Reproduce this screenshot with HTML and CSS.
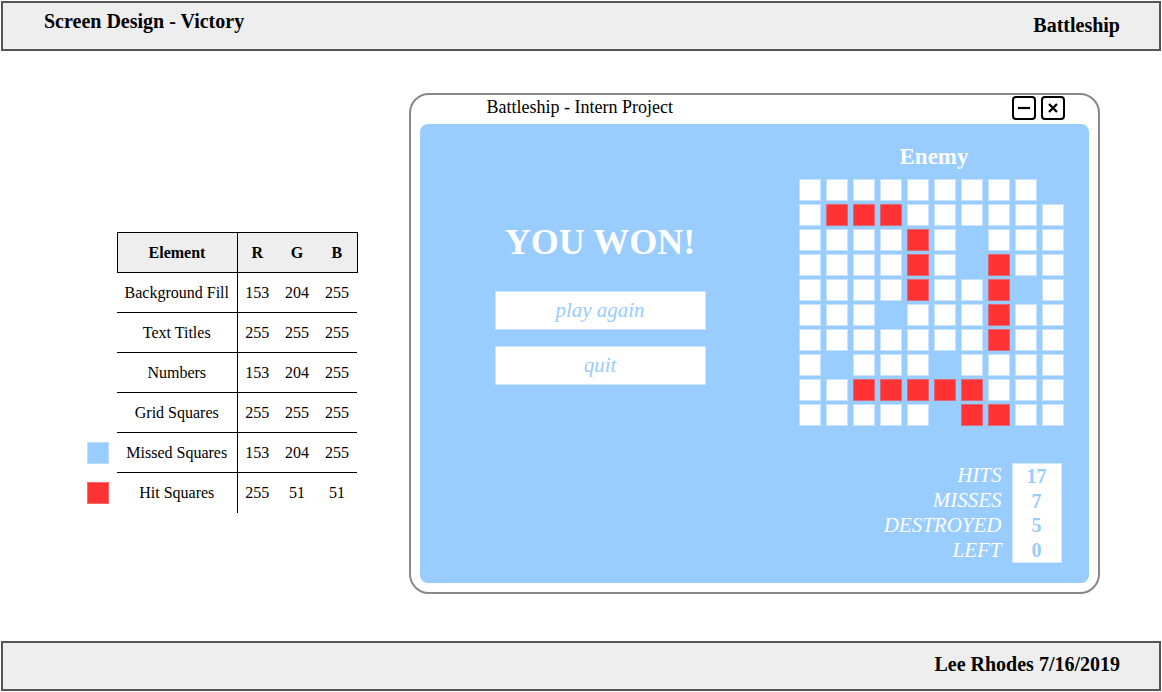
FILE: index.html
```html
<!DOCTYPE html>
<html lang="en">
<head>
<meta charset="utf-8">
<title>Screen Design - Victory</title>
<link rel="stylesheet" href="styles.css">
</head>
<body>
<header class="bar top-bar">
  <div class="bar-title">Screen Design - Victory</div>
  <div class="bar-right">Battleship</div>
</header>

<main class="content">
  <table class="legend">
    <colgroup>
      <col class="col-sw"><col class="col-el"><col class="col-num"><col class="col-num"><col class="col-num">
    </colgroup>
    <thead>
      <tr><th class="sw"></th><th class="el">Element</th><th class="r">R</th><th class="g">G</th><th class="b">B</th></tr>
    </thead>
    <tbody>
      <tr><td class="sw"></td><td class="el">Background Fill</td><td>153</td><td>204</td><td>255</td></tr>
      <tr><td class="sw"></td><td class="el">Text Titles</td><td>255</td><td>255</td><td>255</td></tr>
      <tr><td class="sw"></td><td class="el">Numbers</td><td>153</td><td>204</td><td>255</td></tr>
      <tr><td class="sw"></td><td class="el">Grid Squares</td><td>255</td><td>255</td><td>255</td></tr>
      <tr><td class="sw"><div class="swatch swatch-miss"></div></td><td class="el">Missed Squares</td><td>153</td><td>204</td><td>255</td></tr>
      <tr><td class="sw"><div class="swatch swatch-hit"></div></td><td class="el">Hit Squares</td><td>255</td><td>51</td><td>51</td></tr>
    </tbody>
  </table>

  <section class="window">
    <div class="titlebar">
      <span class="wtitle">Battleship - Intern Project</span>
      <div class="wbtns">
        <div class="wbtn"><svg viewBox="0 0 20 20" width="20" height="20"><line x1="4" y1="10" x2="16" y2="10" stroke="#000" stroke-width="2.2"/></svg></div>
        <div class="wbtn"><svg viewBox="0 0 20 20" width="20" height="20"><path d="M6 6 L14 14 M14 6 L6 14" stroke="#000" stroke-width="2.3" fill="none"/></svg></div>
      </div>
    </div>
    <div class="panel">
      <div class="result">
        <h1 class="won">YOU WON!</h1>
        <div class="action">play again</div>
        <div class="action">quit</div>
      </div>
      <div class="board">
        <h2 class="enemy">Enemy</h2>
        <div class="grid">
          <div class="c"></div><div class="c"></div><div class="c"></div><div class="c"></div><div class="c"></div><div class="c"></div><div class="c"></div><div class="c"></div><div class="c"></div><div class="c m"></div>
          <div class="c"></div><div class="c h"></div><div class="c h"></div><div class="c h"></div><div class="c"></div><div class="c"></div><div class="c"></div><div class="c"></div><div class="c"></div><div class="c"></div>
          <div class="c"></div><div class="c"></div><div class="c"></div><div class="c"></div><div class="c h"></div><div class="c"></div><div class="c m"></div><div class="c"></div><div class="c"></div><div class="c"></div>
          <div class="c"></div><div class="c"></div><div class="c"></div><div class="c"></div><div class="c h"></div><div class="c"></div><div class="c m"></div><div class="c h"></div><div class="c"></div><div class="c"></div>
          <div class="c"></div><div class="c"></div><div class="c"></div><div class="c"></div><div class="c h"></div><div class="c"></div><div class="c"></div><div class="c h"></div><div class="c m"></div><div class="c"></div>
          <div class="c"></div><div class="c"></div><div class="c"></div><div class="c m"></div><div class="c"></div><div class="c"></div><div class="c"></div><div class="c h"></div><div class="c"></div><div class="c"></div>
          <div class="c"></div><div class="c"></div><div class="c"></div><div class="c"></div><div class="c"></div><div class="c"></div><div class="c"></div><div class="c h"></div><div class="c"></div><div class="c"></div>
          <div class="c"></div><div class="c m"></div><div class="c"></div><div class="c"></div><div class="c"></div><div class="c m"></div><div class="c"></div><div class="c"></div><div class="c"></div><div class="c"></div>
          <div class="c"></div><div class="c"></div><div class="c h"></div><div class="c h"></div><div class="c h"></div><div class="c h"></div><div class="c h"></div><div class="c"></div><div class="c"></div><div class="c"></div>
          <div class="c"></div><div class="c"></div><div class="c"></div><div class="c"></div><div class="c"></div><div class="c m"></div><div class="c h"></div><div class="c h"></div><div class="c"></div><div class="c"></div>
        </div>
        <div class="stats">
          <div class="stat-labels">
            <div>HITS</div>
            <div>MISSES</div>
            <div>DESTROYED</div>
            <div>LEFT</div>
          </div>
          <div class="stat-values">
            <div>17</div>
            <div>7</div>
            <div>5</div>
            <div>0</div>
          </div>
        </div>
      </div>
    </div>
  </section>
</main>

<footer class="bar bottom-bar">
  <div class="bar-right foot-text">Lee Rhodes 7/16/2019</div>
</footer>
</body>
</html>
```

FILE: styles.css
```css
* { box-sizing: border-box; }

html, body {
  margin: 0;
  padding: 0;
}

body {
  width: 1162px;
  height: 692px;
  overflow: hidden;
  background: #fff;
  color: #000;
  font-family: "Liberation Serif", "Times New Roman", serif;
}

/* ---------- header / footer bars ---------- */
.bar {
  display: flex;
  align-items: flex-start;
  justify-content: space-between;
  height: 50px;
  margin: 0 1px;
  background: #eee;
  border: 2px solid #555;
  padding: 0 39px 0 41px;
  font-weight: bold;
  font-size: 20px;
  line-height: 22px;
}

.top-bar { margin-top: 1px; }
.bottom-bar { margin-bottom: 1px; justify-content: flex-end; }

.bar-title { margin-top: 7px; }
.bar-right { margin-top: 11px; }
.foot-text { margin-top: 10px; }

/* ---------- main area ---------- */
.content {
  display: flex;
  align-items: flex-start;
  height: 590px;
}

/* ---------- colour legend table ---------- */
.legend {
  margin: 181px 0 0 87px;
  border-collapse: collapse;
  table-layout: fixed;
  width: 270px;
  font-size: 16px;
}

.col-sw { width: 30px; }
.col-el { width: 120px; }
.col-num { width: 40px; }

.legend th,
.legend td {
  padding: 0;
  height: 40px;
  text-align: center;
  vertical-align: middle;
  font-weight: normal;
}

.legend thead th {
  background: #eee;
  font-weight: bold;
  border-top: 1px solid #000;
  border-bottom: 1px solid #000;
}

.legend thead th.sw {
  background: transparent;
  border: none;
}

.legend thead th.el { border-left: 1px solid #000; }
.legend thead th.b { border-right: 1px solid #000; }

.legend .el { border-right: 1px solid #000; }

.legend tbody tr + tr td:not(.sw) { border-top: 1px solid #000; }

.legend td.sw { text-align: left; }

.swatch {
  width: 22px;
  height: 22px;
}

.swatch-miss { background: #99ccff; border: 1px solid #bcdcff; }
.swatch-hit { background: #ff3333; border: 1px solid #ff6b6b; }

/* ---------- game window ---------- */
.window {
  margin: 42px 0 0 51px;
  width: 691px;
  height: 501px;
  border: 2px solid #888;
  border-radius: 20px;
  padding: 0 9px 9px;
  background: #fff;
}

.titlebar {
  display: flex;
  align-items: flex-start;
  justify-content: space-between;
  height: 29px;
  padding: 1px 24px 0 67px;
}

.wtitle {
  font-size: 18px;
  line-height: 20px;
  margin-top: 1px;
}

.wbtns {
  display: flex;
  gap: 5px;
}

.wbtn {
  width: 24px;
  height: 24px;
  border: 2px solid #000;
  border-radius: 4px;
  background: #fff;
  display: flex;
  align-items: center;
  justify-content: center;
}

.wbtn svg { display: block; }

.panel {
  display: flex;
  align-items: flex-start;
  height: 459px;
  background: #99ccff;
  border-radius: 8px;
}

/* left side: result */
.result {
  width: 211px;
  margin-left: 75px;
  padding-top: 97px;
  display: flex;
  flex-direction: column;
  gap: 16px;
}

.won {
  margin: 0 0 12px;
  color: #fff;
  font-size: 36px;
  line-height: 42px;
  font-weight: bold;
  text-align: center;
}

.action {
  height: 39px;
  background: #fff;
  border: 1px solid #cce5ff;
  color: #99ccff;
  font-style: italic;
  font-size: 21px;
  display: flex;
  align-items: center;
  justify-content: center;
}

/* right side: board */
.board {
  width: 265px;
  margin-left: auto;
  margin-right: 25px;
  padding-top: 20px;
}

.enemy {
  margin: 0 0 9px;
  color: #fff;
  font-size: 23px;
  line-height: 26px;
  font-weight: bold;
  text-align: center;
  padding-left: 6px;
}

.grid {
  display: grid;
  grid-template-columns: repeat(10, 22px);
  grid-auto-rows: 22px;
  column-gap: 5px;
  row-gap: 3px;
}

.c {
  background: #fff;
  border: 1px solid #c8e3ff;
}

.c.h {
  background: #ff3333;
  border-color: #e0667a;
}

.c.m { visibility: hidden; }

.stats {
  display: flex;
  justify-content: flex-end;
  gap: 10px;
  margin-top: 37px;
  margin-right: 2px;
}

.stat-labels {
  color: #fff;
  font-style: italic;
  font-size: 21px;
  line-height: 25px;
  text-align: right;
}

.stat-values {
  width: 50px;
  background: #fff;
  border: 1px solid #d6ebff;
  color: #99ccff;
  font-weight: bold;
  font-size: 20px;
  line-height: 24.5px;
  text-align: center;
}
```
